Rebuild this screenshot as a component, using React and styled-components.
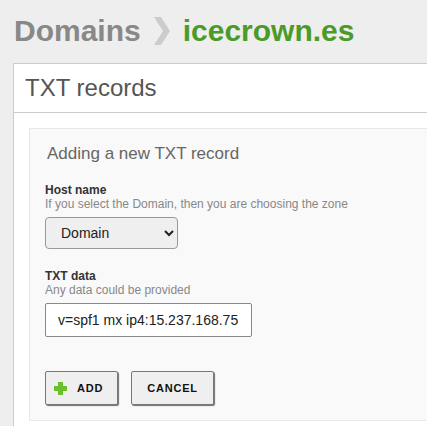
import styled, { createGlobalStyle } from 'styled-components';

const Global = createGlobalStyle`
html, body {
  margin: 0;
  padding: 0;
  background: #eeeeee;
  overflow: hidden;
  font-family: "Liberation Sans", Arial, sans-serif;
}
`;

const Crumbs = styled.h1`
display: flex;
align-items: center;
gap: 13px;
margin: 0;
padding: 14px 0 15px 14px;
font-size: 30px;
line-height: 34px;
font-weight: bold;
`;

const Crumb = styled.span`
color: ${p => p.$current ? '#4b9b28' : '#888888'};
`;

const Panel = styled.section`
margin: 0 -20px 0 13px;
background: #ffffff;
border: 1px solid #cccccc;
`;

const PanelHead = styled.h2`
margin: 0;
padding-left: 11px;
height: 48px;
line-height: 48px;
font-size: 24px;
font-weight: normal;
color: #555555;
border-bottom: 1px solid #cccccc;
`;

const PanelBody = styled.div`
padding: 15px;
`;

const FormBox = styled.form`
background: #f9f9f9;
border: 1px solid #e8e8e8;
padding: 15px;
`;

const FormTitle = styled.h3`
margin: 0 0 19px 2px;
font-size: 17px;
line-height: 20px;
font-weight: normal;
color: #666666;
`;

const Field = styled.div`
display: flex;
flex-direction: column;
align-items: flex-start;
margin-bottom: ${p => p.$gap || 20}px;
`;

const Label = styled.label`
font-size: 12px;
line-height: 14px;
font-weight: bold;
color: #333333;
`;

const Hint = styled.span`
font-size: 12px;
line-height: 14px;
color: #888888;
margin-bottom: 6px;
`;

const Select = styled.select`
width: 133px;
height: 32px;
padding: 0 0 0 11px;
font-family: "Liberation Sans", Arial, sans-serif;
font-size: 14px;
color: #222222;
background: #efefef;
border: 1px solid #999999;
border-radius: 4px;
`;

const Input = styled.input`
box-sizing: border-box;
width: 207px;
height: 34px;
padding: 0 0 0 12px;
font-family: "Liberation Sans", Arial, sans-serif;
font-size: 14px;
color: #222222;
background: #ffffff;
border: 1px solid #888888;
border-radius: 2px;
`;

const Actions = styled.div`
display: flex;
gap: 13px;
`;

const Button = styled.button`
display: flex;
align-items: center;
gap: 10px;
height: 34px;
box-sizing: border-box;
padding: 0 ${p => p.$icon ? 14 : 15}px 0 ${p => p.$icon ? 8 : 15}px;
background: #efefef;
border: 1px solid #777777;
border-radius: 2px;
box-shadow: 1px 1px 1px rgba(0, 0, 0, 0.55);
font-family: "Liberation Sans", Arial, sans-serif;
font-size: 11px;
font-weight: bold;
letter-spacing: 0.8px;
color: #111111;
`;

function Chevron() {
  return (
    <svg width="16" height="28" viewBox="0 0 16 28">
      <polygon points="0,0 7,0 16,14 7,28 0,28 9,14" fill="#cccccc" />
    </svg>
  );
}

function Plus() {
  return (
    <svg width="13" height="13" viewBox="0 0 13 13">
      <path d="M4 0h5v4h4v5H9v4H4V9H0V4h4z" fill="#6abf2a" />
    </svg>
  );
}

export default function App() {
  return (
    <>
      <Global />
      <Crumbs>
        <Crumb>Domains</Crumb>
        <Chevron />
        <Crumb $current>icecrown.es</Crumb>
      </Crumbs>
      <Panel>
        <PanelHead>TXT records</PanelHead>
        <PanelBody>
          <FormBox onSubmit={e => e.preventDefault()}>
            <FormTitle>Adding a new TXT record</FormTitle>
            <Field>
              <Label>Host name</Label>
              <Hint>If you select the Domain, then you are choosing the zone</Hint>
              <Select defaultValue="domain">
                <option value="domain">Domain</option>
              </Select>
            </Field>
            <Field $gap={34}>
              <Label>TXT data</Label>
              <Hint>Any data could be provided</Hint>
              <Input defaultValue="v=spf1 mx ip4:15.237.168.75" />
            </Field>
            <Actions>
              <Button type="submit" $icon><Plus />ADD</Button>
              <Button type="button">CANCEL</Button>
            </Actions>
          </FormBox>
        </PanelBody>
      </Panel>
    </>
  );
}
